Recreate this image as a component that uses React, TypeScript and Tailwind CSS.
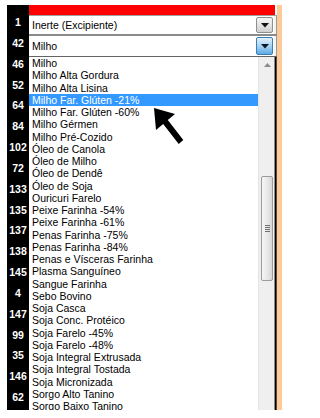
const rowNumbers = ["1", "42", "46", "52", "64", "84", "102", "72", "133", "135", "137", "138", "145", "4", "147", "99", "35", "146", "62"]

const items = [
  "Milho",
  "Milho Alta Gordura",
  "Milho Alta Lisina",
  "Milho Far. Glúten -21%",
  "Milho Far. Glúten -60%",
  "Milho Gérmen",
  "Milho Pré-Cozido",
  "Óleo de Canola",
  "Óleo de Milho",
  "Óleo de Dendê",
  "Óleo de Soja",
  "Ouricuri Farelo",
  "Peixe Farinha -54%",
  "Peixe Farinha -61%",
  "Penas Farinha -75%",
  "Penas Farinha -84%",
  "Penas e Vísceras Farinha",
  "Plasma Sanguíneo",
  "Sangue Farinha",
  "Sebo Bovino",
  "Soja Casca",
  "Soja Conc. Protéico",
  "Soja Farelo -45%",
  "Soja Farelo -48%",
  "Soja Integral Extrusada",
  "Soja Integral Tostada",
  "Soja Micronizada",
  "Sorgo Alto Tanino",
  "Sorgo Baixo Tanino",
]

const SELECTED = 3

function DownTriangle({ color = "#111" }: { color?: string }) {
  return (
    <svg width="8" height="5" viewBox="0 0 8 5">
      <polygon points="0,0 8,0 4,4.5" fill={color} />
    </svg>
  )
}

function ComboBox({ text, active }: { text: string; active?: boolean }) {
  return (
    <div className="flex h-full items-center bg-white">
      <span className="flex-1 pl-[3px] pt-[1px] text-[10.5px] text-black">{text}</span>
      {active ? (
        <div className="flex h-[18px] w-[17px] items-center justify-center rounded-[2px] border border-[#3c7fb1] bg-gradient-to-b from-[#e3f1fb] via-[#a9d3f2] to-[#5aa9e6]">
          <DownTriangle color="#0b1a2a" />
        </div>
      ) : (
        <div className="flex h-[16px] w-[17px] items-center justify-center rounded-[2px] border border-[#8e8f8f] bg-gradient-to-b from-[#f6f6f6] via-[#e4e4e4] to-[#cfcfcf]">
          <DownTriangle />
        </div>
      )}
      <div className="ml-[1px] h-full w-[2px] bg-[#f4f4f4]" />
      <div className="h-full w-[1px] bg-[#9a9a9a]" />
    </div>
  )
}

function Scrollbar() {
  return (
    <div className="flex w-[15px] flex-col bg-[#efefef]">
      <div className="flex h-[15px] items-center justify-center pl-[1px]">
        <svg width="7" height="4" viewBox="0 0 7 4">
          <polygon points="3.5,0 7,4 0,4" fill="#8a8a8a" />
        </svg>
      </div>
      <div className="h-[104px]" />
      <div className="ml-[2px] mr-[1px] flex h-[105px] items-center justify-center rounded-[2px] border border-[#9b9b9b] bg-gradient-to-r from-[#f5f5f5] via-[#e9e9e9] to-[#d6d6d6]">
        <div className="flex w-[5px] flex-col gap-[1px]">
          <div className="h-[1px] bg-[#6f6f6f]" />
          <div className="h-[1px] bg-[#6f6f6f]" />
          <div className="h-[1px] bg-[#6f6f6f]" />
          <div className="h-[1px] bg-[#6f6f6f]" />
        </div>
      </div>
    </div>
  )
}

export default function App() {
  return (
    <div className="relative h-[418px] w-[288px] overflow-hidden bg-white font-['Liberation_Sans',Arial,sans-serif]">
      <div className="flex h-[410px] pl-[7px] pt-[5px]">
        <div className="flex w-[22px] flex-col overflow-hidden bg-black pt-[7.6px]">
          {rowNumbers.map((n, i) => (
            <div
              key={i}
              className="flex h-[20.83px] shrink-0 items-center justify-center text-[10.5px] font-bold text-white"
            >
              {n}
            </div>
          ))}
        </div>

        <div className="flex w-[248px] flex-col">
          <div className="h-[10px] w-[246px] shrink-0 bg-[#ff0000]" />
          <div className="h-[1px] shrink-0 bg-[#a0a0a0]" />
          <div className="h-[18px] shrink-0">
            <ComboBox text="Inerte (Excipiente)" />
          </div>
          <div className="h-[2px] shrink-0 bg-[#8a8a8a]" />
          <div className="h-[20px] shrink-0">
            <ComboBox text="Milho" active />
          </div>
          <div className="h-[1px] shrink-0 bg-[#646464]" />

          <div className="flex min-h-0 flex-1">
            <div className="w-[229px] overflow-hidden bg-white">
              {items.map((item, i) => (
                <div
                  key={item}
                  className={
                    i === SELECTED
                      ? "h-[12.26px] whitespace-nowrap bg-[#3399ff] pl-[3px] text-[10.5px] leading-[12.26px] text-white"
                      : "h-[12.26px] whitespace-nowrap pl-[3px] text-[10.5px] leading-[12.26px] text-black"
                  }
                >
                  {item}
                </div>
              ))}
            </div>
            <div className="w-[1px] bg-[#e4e4e4]" />
            <Scrollbar />
            <div className="w-[1px] bg-[#8c8c8c]" />
            <div className="w-[1px] bg-black" />
            <div className="w-[1px] bg-[#5a4a3c]" />
          </div>
        </div>

        <div className="w-[5px] bg-[#fdcb9a]" />
      </div>

      <svg
        className="absolute left-[150px] top-[104px]"
        width="40"
        height="46"
        viewBox="150 104 40 46"
      >
        <polygon
          points="154,108 175,114 167.8,120.1 183.3,140.1 178.7,143.9 163.2,123.9 156,130"
          fill="#000"
        />
      </svg>
    </div>
  )
}
